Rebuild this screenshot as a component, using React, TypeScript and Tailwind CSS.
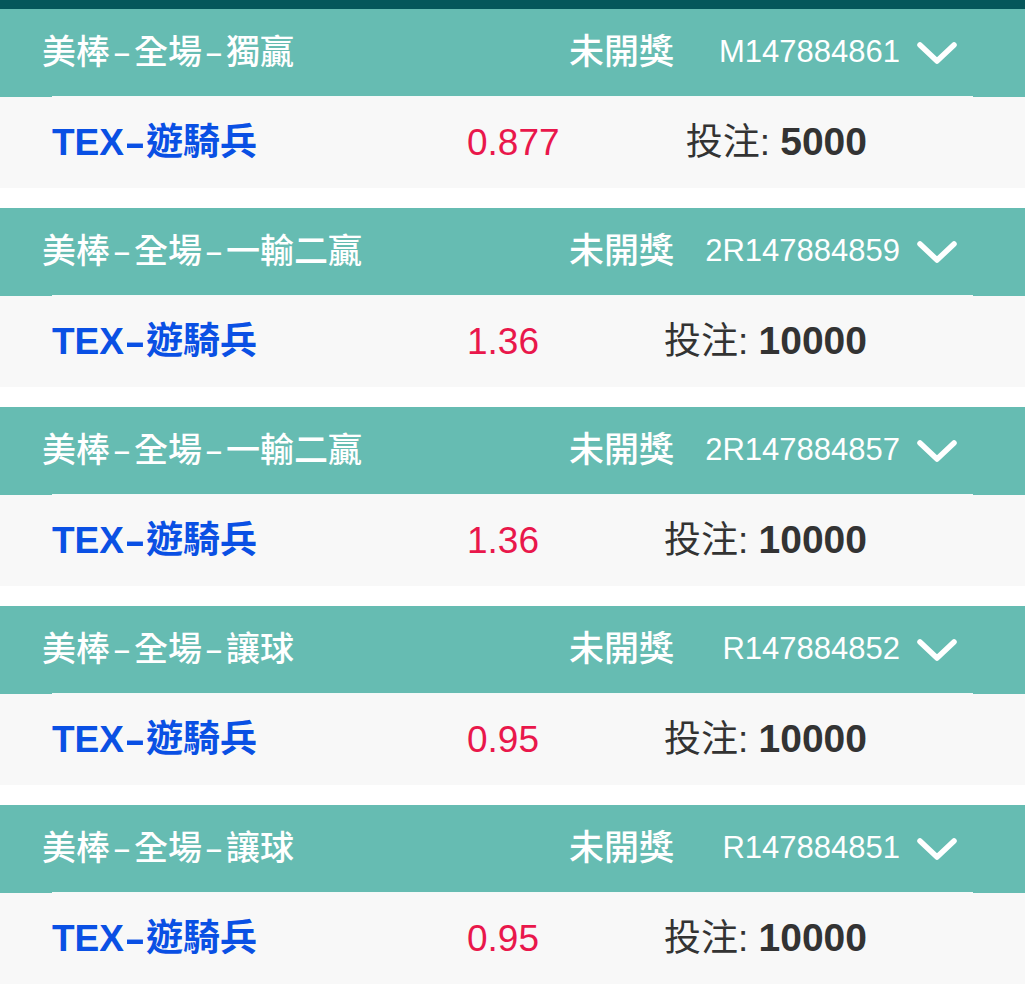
import React from 'react'

const bets = [
  { title: ['美棒', '全場', '獨贏'], id: 'M147884861', odds: '0.877', amount: '5000' },
  { title: ['美棒', '全場', '一輸二贏'], id: '2R147884859', odds: '1.36', amount: '10000' },
  { title: ['美棒', '全場', '一輸二贏'], id: '2R147884857', odds: '1.36', amount: '10000' },
  { title: ['美棒', '全場', '讓球'], id: 'R147884852', odds: '0.95', amount: '10000' },
  { title: ['美棒', '全場', '讓球'], id: 'R147884851', odds: '0.95', amount: '10000' },
]

const font = { fontFamily: '"Liberation Sans", "Noto Sans CJK TC", sans-serif' }

// PingFang draws the hyphen longer than Liberation does
const Dash = ({ w }: { w: string }) => (
  <span className={`inline-block scale-x-[1.7] text-center ${w}`}>-</span>
)

const Chevron = () => (
  <svg width="42" height="26" viewBox="0 0 42 26" className="shrink-0">
    <polyline
      points="4,5 21,21 38,5"
      fill="none"
      stroke="white"
      strokeWidth="5.5"
      strokeLinecap="round"
      strokeLinejoin="round"
    />
  </svg>
)

const BetCard = ({ bet }: { bet: (typeof bets)[number] }) => (
  <div className="flex flex-col">
    <div className="flex flex-col bg-[#66bcb2]">
      <div className="flex h-[87px] items-center pl-[42px] pr-[67px] text-white">
        <span className="flex-1 text-[34px] font-medium">
          {bet.title[0]}
          <Dash w="w-[24px]" />
          {bet.title[1]}
          <Dash w="w-[24px]" />
          {bet.title[2]}
        </span>
        <span className="w-[125px] text-[35px] font-medium">未開獎</span>
        <span className="w-[206px] text-right text-[31px]">{bet.id}</span>
        <span className="ml-[16px] flex">
          <Chevron />
        </span>
      </div>
      <div className="mx-[52px] h-px bg-[#f4f9f8]" />
    </div>
    <div className="flex h-[91px] items-center bg-[#f8f8f8] pl-[52px] pr-[158px]">
      <span className="w-[415px] text-[37px] font-bold text-[#0a50e4]">
        TEX
        <Dash w="w-[22px]" />
        遊騎兵
      </span>
      <span className="flex-1 text-[37px] text-[#e9174b]">{bet.odds}</span>
      <span className="text-[37px] text-[#333333]">
        投注: <span className="text-[39px] font-bold">{bet.amount}</span>
      </span>
    </div>
  </div>
)

const App = () => {
  return (
    <div className="min-h-screen bg-white" style={font}>
      <div className="h-[9px] bg-[#05575b]" />
      <div className="flex flex-col gap-[20px]">
        {bets.map((bet) => (
          <BetCard key={bet.id} bet={bet} />
        ))}
      </div>
    </div>
  )
}

export default App
